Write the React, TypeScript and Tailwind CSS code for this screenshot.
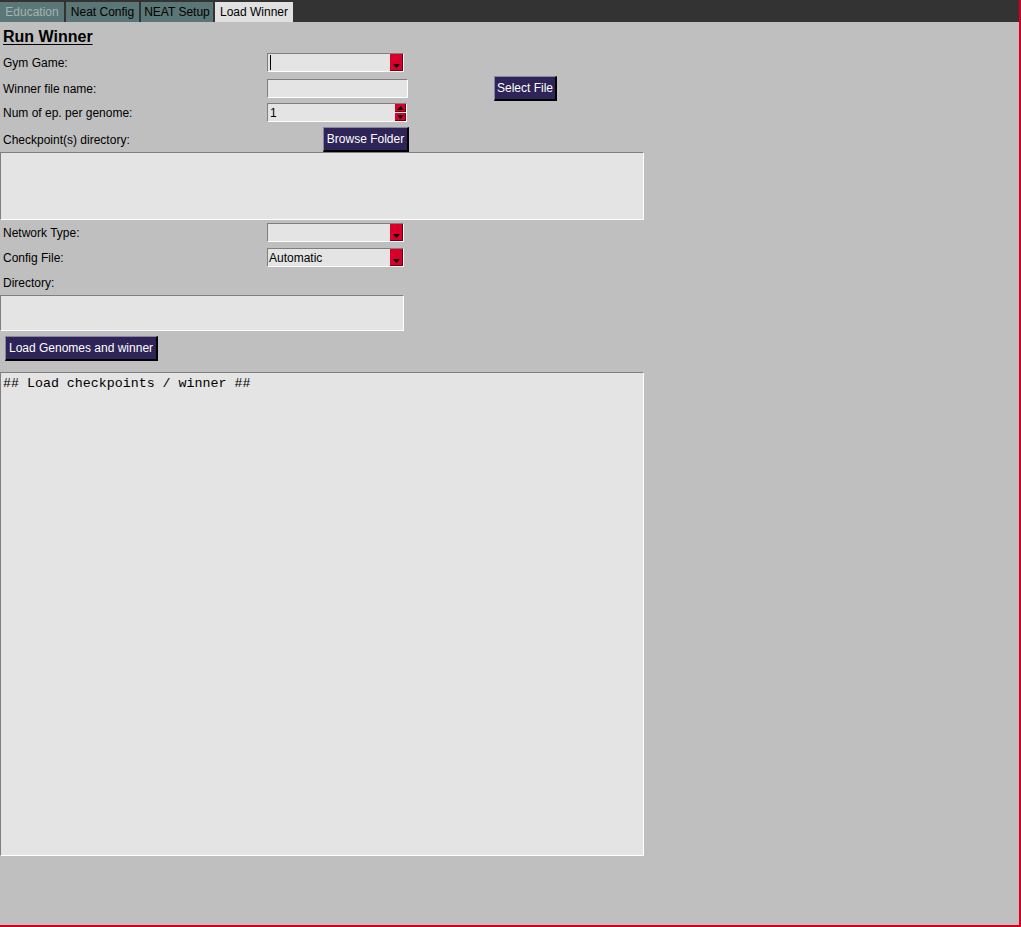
import React from 'react';

const font = { fontFamily: '"Liberation Sans", Arial, sans-serif' };

function Label({ children, w = 'w-[267px]' }: { children: React.ReactNode; w?: string }) {
  return <div className={`${w} pl-[3px] text-[12px] leading-[14px] text-black shrink-0 whitespace-nowrap`}>{children}</div>;
}

function DownArrow() {
  return (
    <svg width="7" height="4" viewBox="0 0 7 4" className="block">
      <polygon points="0,0 7,0 3.5,4" fill="#000" />
    </svg>
  );
}

function UpArrow() {
  return (
    <svg width="7" height="4" viewBox="0 0 7 4" className="block">
      <polygon points="0,4 7,4 3.5,0" fill="#000" />
    </svg>
  );
}

function Combo({ value, caret }: { value?: string; caret?: boolean }) {
  return (
    <div className="flex h-[19px] w-[137px] border-t border-l border-t-[#7f7f7f] border-l-[#7f7f7f] border-b border-r border-b-white border-r-white bg-[#e4e4e4]">
      <div className="flex flex-1 items-center pl-[1px] text-[12px] leading-[14px] text-black">
        {caret && <span className="ml-[1px] inline-block h-[15px] w-[1px] bg-black" />}
        {value}
      </div>
      <div className="flex w-[13px] items-end justify-center border-r border-b border-r-[#6b0010] border-b-[#6b0010] bg-[#d8002a] pb-[2px]">
        <DownArrow />
      </div>
    </div>
  );
}

function Entry({ w, h, children, className = '' }: { w: string; h: string; children?: React.ReactNode; className?: string }) {
  return (
    <div
      className={`${w} ${h} ${className} border-t border-l border-t-[#7f7f7f] border-l-[#7f7f7f] border-b border-r border-b-white border-r-white bg-[#e4e4e4]`}
    >
      {children}
    </div>
  );
}

function Button({ children, className = '' }: { children: React.ReactNode; className?: string }) {
  return (
    <div
      className={`${className} flex h-[25px] items-center justify-center whitespace-nowrap border-t border-l border-t-[#8a86a0] border-l-[#8a86a0] border-b-2 border-r-2 border-b-black border-r-black bg-[#2e2457] text-[12px] leading-[14px] text-white`}
    >
      {children}
    </div>
  );
}

export default function App() {
  const tabs = [
    { name: 'Education', w: 'w-[64px]', cls: 'bg-[#5b7676] text-[#a3b4b4]' },
    { name: 'Neat Config', w: 'w-[73px]', cls: 'bg-[#5b7676] text-black' },
    { name: 'NEAT Setup', w: 'w-[72px]', cls: 'bg-[#5b7676] text-black' },
    { name: 'Load Winner', w: 'w-[78px]', cls: 'bg-[#e1e1e1] text-black' },
  ];

  return (
    <div style={font} className="flex h-[927px] w-[1021px] flex-col border-r-2 border-b-2 border-r-[#d4001f] border-b-[#d4001f] bg-[#bfbfbf]">
      <div className="flex h-[22px] items-end gap-[2px] bg-[#333333]">
        {tabs.map((t) => (
          <div key={t.name} className={`${t.w} ${t.cls} flex h-[20px] items-center justify-center whitespace-nowrap text-[12px] leading-[14px]`}>
            {t.name}
          </div>
        ))}
      </div>

      <div className="flex flex-col">
        <div className="mt-[5px] pl-[3px] text-[16px] font-bold leading-[19px] underline underline-offset-2 text-black">
          Run Winner
        </div>

        <div className="mt-[7px] flex h-[19px] items-center">
          <Label>Gym Game:</Label>
          <Combo caret />
        </div>

        <div className="mt-[4px] flex h-[25px] items-center">
          <Label>Winner file name:</Label>
          <Entry w="w-[141px]" h="h-[19px]" />
          <Button className="ml-[86px] w-[63px]">Select File</Button>
        </div>

        <div className="mt-[2px] flex h-[19px] items-center">
          <Label>Num of ep. per genome:</Label>
          <div className="flex h-[19px] w-[140px] border-t border-l border-t-[#7f7f7f] border-l-[#7f7f7f] border-b border-r border-b-white border-r-white bg-[#e4e4e4]">
            <div className="flex flex-1 items-center pl-[2px] text-[12px] leading-[14px] text-black">1</div>
            <div className="flex w-[11px] flex-col gap-[1px]">
              <div className="flex flex-1 items-center justify-center border-r border-b border-r-[#6b0010] border-b-[#6b0010] bg-[#d8002a]">
                <UpArrow />
              </div>
              <div className="flex flex-1 items-center justify-center border-r border-b border-r-[#6b0010] border-b-[#6b0010] bg-[#d8002a]">
                <DownArrow />
              </div>
            </div>
          </div>
        </div>

        <div className="mt-[5px] flex h-[25px] items-center">
          <Label w="w-[323px]">Checkpoint(s) directory:</Label>
          <Button className="w-[86px]">Browse Folder</Button>
        </div>

        <Entry w="w-[644px]" h="h-[68px]" />

        <div className="mt-[3px] flex h-[19px] items-center">
          <Label>Network Type:</Label>
          <Combo />
        </div>

        <div className="mt-[6px] flex h-[19px] items-center">
          <Label>Config File:</Label>
          <Combo value="Automatic" />
        </div>

        <div className="mt-[8px] flex h-[16px] items-center">
          <Label>Directory:</Label>
        </div>

        <Entry w="w-[404px]" h="h-[36px]" className="mt-[4px]" />

        <div className="mt-[5px] flex pl-[5px]">
          <Button className="w-[153px]">Load Genomes and winner</Button>
        </div>

        <Entry w="w-[644px]" h="h-[484px]" className="mt-[11px]">
          <div className="pl-[2px] pt-[3px] text-[13.3px] leading-[15px] text-black" style={{ fontFamily: '"Liberation Mono", "Courier New", monospace' }}>
            ## Load checkpoints / winner ##
          </div>
        </Entry>
      </div>
    </div>
  );
}
